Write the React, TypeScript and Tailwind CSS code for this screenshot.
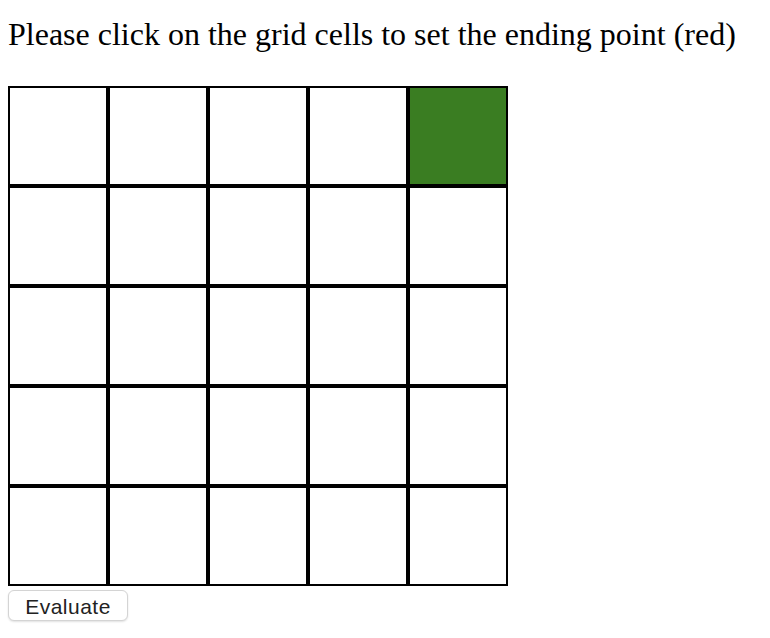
import { useState } from "react";

const SIZE = 5;

export default function App() {
    const [end, setEnd] = useState<number>(4);

    return (
        <div className="bg-white min-h-screen px-2 font-['Liberation_Serif',serif] text-black">
            <p className="text-[32px] leading-[36px] pt-[16px] pb-[34px]">
                Please click on the grid cells to set the ending point (red)
            </p>
            <div className="grid grid-cols-5 w-[500px]">
                {Array.from({ length: SIZE * SIZE }).map((_, i) => (
                    <div
                        key={i}
                        onClick={() => setEnd(i)}
                        className={`h-[100px] border-2 border-black ${i === end ? "bg-[#3a7d22]" : "bg-white"}`}
                    />
                ))}
            </div>
            <button className="mt-[4px] w-[120px] h-[31px] rounded-[6px] border border-[#d4d4d4] bg-white shadow-[0_1px_2px_rgba(0,0,0,0.12)] font-['Liberation_Sans',sans-serif] text-[21px] tracking-[0.5px] text-[#222]">
                Evaluate
            </button>
        </div>
    );
}
